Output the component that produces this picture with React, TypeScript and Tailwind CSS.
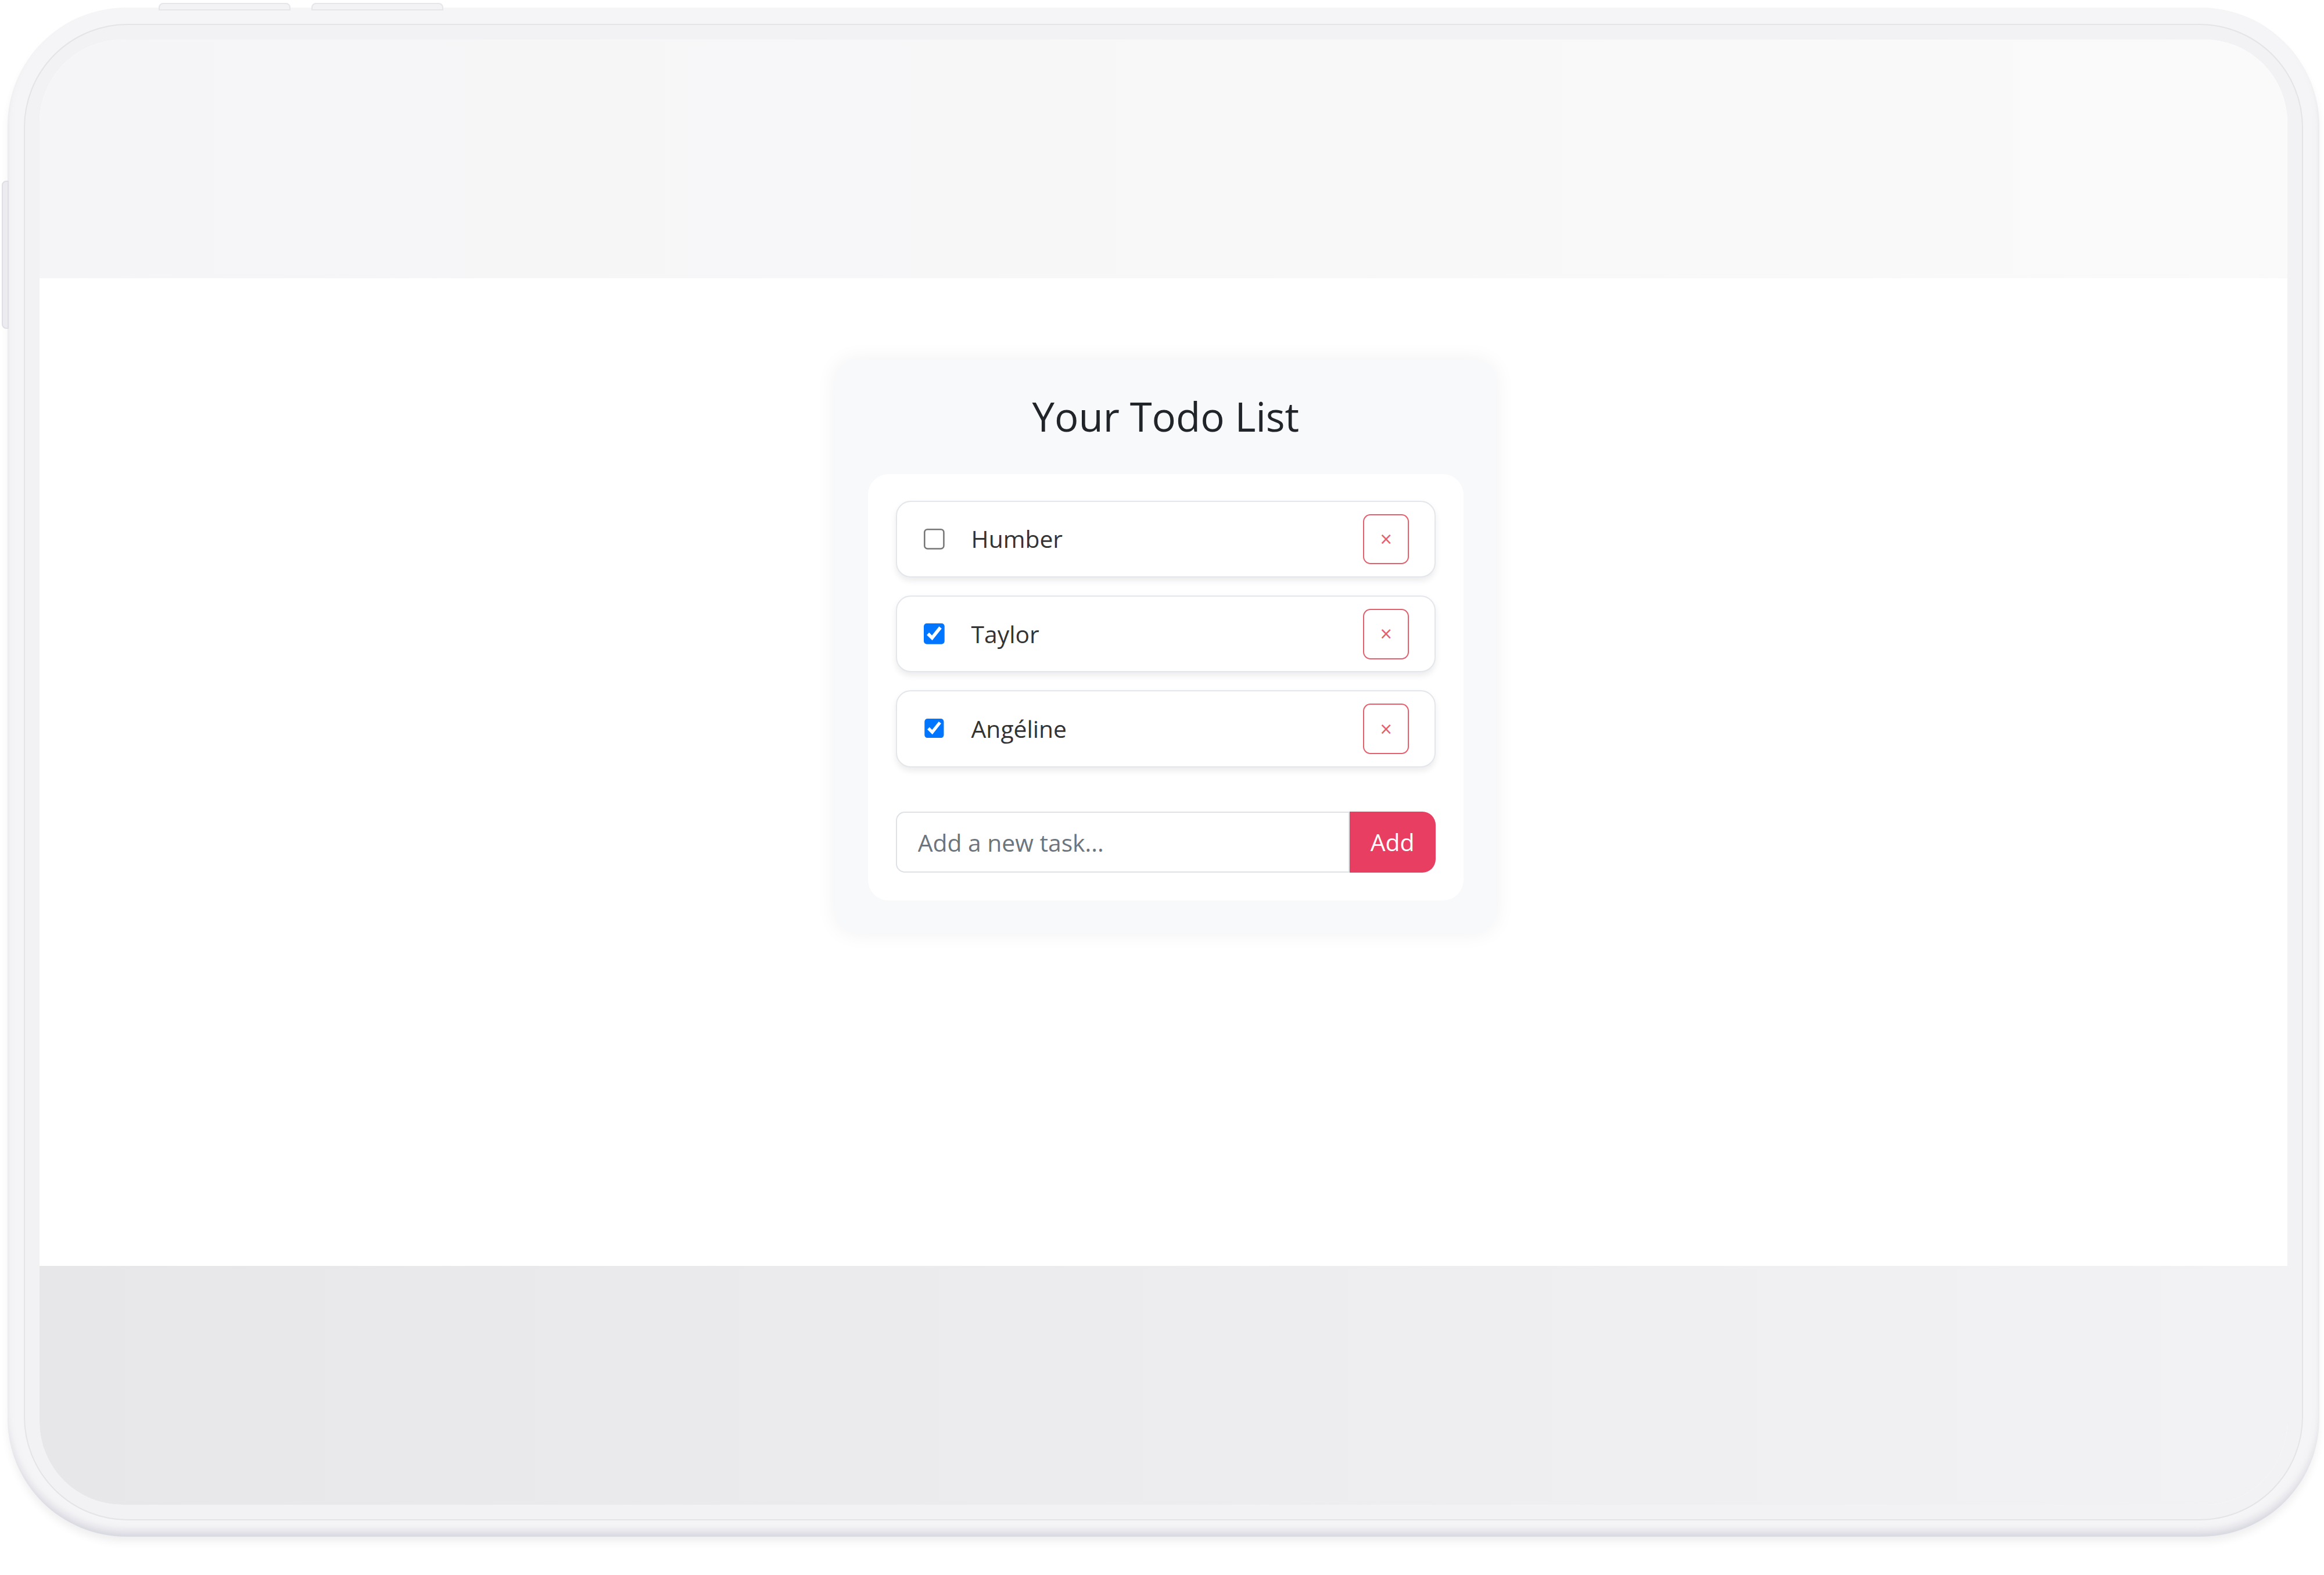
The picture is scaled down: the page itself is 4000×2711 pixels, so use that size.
import { useState } from 'react';

type Task = { id: number; name: string; done: boolean };

const initialTasks: Task[] = [
  { id: 1, name: 'Humber', done: false },
  { id: 2, name: 'Taylor', done: true },
  { id: 3, name: 'Angéline', done: true },
];

function TodoCard() {
  const [tasks, setTasks] = useState<Task[]>(initialTasks);
  const [draft, setDraft] = useState('');

  const toggle = (id: number) =>
    setTasks((prev) => prev.map((t) => (t.id === id ? { ...t, done: !t.done } : t)));

  const remove = (id: number) => setTasks((prev) => prev.filter((t) => t.id !== id));

  const add = () => {
    if (!draft.trim()) return;
    setTasks((prev) => [...prev, { id: Date.now(), name: draft.trim(), done: false }]);
    setDraft('');
  };

  return (
    <div className="w-[446px] rounded-[14px] bg-[#f8f9fa] px-[22px] pt-[21px] pb-[22px] shadow-[0_0_14px_rgba(0,0,0,0.06)]">
      <h2 className="h-[34px] mb-[22px] text-center text-[27px] leading-[34px] text-[#212529] font-['Open_Sans',sans-serif]">
        Your Todo List
      </h2>

      <div className="rounded-[14px] bg-white px-[19px] pt-[18px] pb-[19px]">
        <ul className="flex flex-col gap-[12px]">
          {tasks.map((task) => (
            <li
              key={task.id}
              className="flex h-[52px] items-center rounded-[10px] border border-[#e3e6ea] bg-white pl-[18px] pr-[17px] shadow-[0_2px_4px_rgba(0,0,0,0.08)]"
            >
              <input
                type="checkbox"
                checked={task.done}
                onChange={() => toggle(task.id)}
                className="m-0 h-[14px] w-[14px] accent-[#0075ff]"
              />
              <span className="ml-[18px] flex-1 text-[16px] text-[#333333]">{task.name}</span>
              <button
                onClick={() => remove(task.id)}
                className="flex h-[34px] w-[31px] items-center justify-center rounded-[5px] border border-[#e4606d] text-[14px] leading-none text-[#e4606d]"
              >
                ×
              </button>
            </li>
          ))}
        </ul>

        <div className="mt-[30px] flex h-[41px]">
          <input
            value={draft}
            onChange={(e) => setDraft(e.target.value)}
            placeholder="Add a new task..."
            className="h-full min-w-0 flex-1 rounded-l-[6px] border border-[#dee2e6] px-[14px] text-[16px] text-[#333333] outline-none placeholder:text-[#6c757d]"
          />
          <button
            onClick={add}
            className="h-full w-[58px] rounded-r-[9px] bg-[#e83e62] text-[16px] text-white"
          >
            Add
          </button>
        </div>
      </div>
    </div>
  );
}

export default function App() {
  return (
    <div className="h-[1063px] w-[1568px] overflow-hidden bg-white pl-[5px] pt-[5px] font-['Open_Sans',sans-serif] [zoom:2.551]">
      {/* tablet frame */}
      <div className="relative h-[1032px] w-[1560px] rounded-[80px] bg-[#f5f5f7] p-[11px] shadow-[0_4px_6px_-1px_rgba(0,0,0,0.07),inset_0_-5px_6px_-2px_rgba(150,150,172,0.35)]">
        <div className="absolute -top-[3px] left-[102px] h-[5px] w-[89px] rounded-t-[3px] border border-[#e6e6ea] bg-[#f3f3f5]" />
        <div className="absolute -top-[3px] left-[205px] h-[5px] w-[89px] rounded-t-[3px] border border-[#e6e6ea] bg-[#f3f3f5]" />
        <div className="absolute -left-[4px] top-[117px] h-[100px] w-[5px] rounded-l-[3px] border border-[#dedee4] bg-[#ececf0]" />

        <div className="h-full w-full rounded-[70px] border border-[#e4e4e8] bg-[#f2f2f4] p-[10px]">
          {/* screen */}
          <div className="flex h-full w-full flex-col overflow-hidden rounded-[56px] bg-white">
            <div className="h-[161px] shrink-0 bg-gradient-to-r from-[#f5f5f7] to-[#fafafa]" />
            <main className="flex flex-1 justify-center bg-white pl-[3px] pt-[55px]">
              <div>
                <TodoCard />
              </div>
            </main>
            <div className="h-[161px] shrink-0 bg-gradient-to-r from-[#e7e7ea] to-[#f2f2f4]" />
          </div>
        </div>
      </div>
    </div>
  );
}
